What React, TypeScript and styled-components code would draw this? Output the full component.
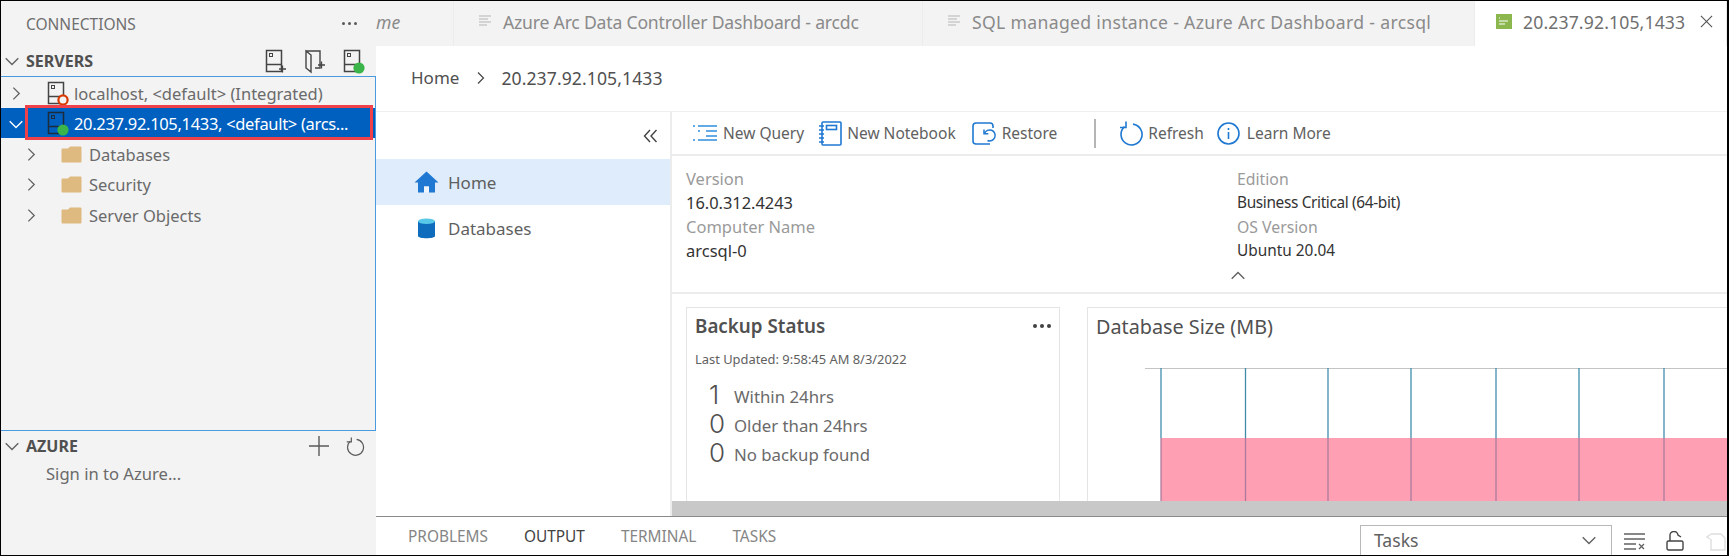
import React from 'react'
import styled, { createGlobalStyle } from 'styled-components'

const GlobalStyle = createGlobalStyle`
  html, body { margin: 0; padding: 0; background: #fff; }
  * { box-sizing: border-box; }
  body { font-family: "Noto Sans", "Open Sans", sans-serif; color: #616161; }
`

const Frame = styled.div`
  width: 1729px;
  height: 556px;
  display: flex;
  border: 1px solid #000;
  border-right-width: 2px;
  overflow: hidden;
  background: #fff;
`

const Sidebar = styled.aside`
  width: 375px;
  flex-shrink: 0;
  background: #f3f3f3;
  display: flex;
  flex-direction: column;
`

const SidebarTitle = styled.div`
  height: 45px;
  padding: 0 19px 0 25px;
  display: flex;
  align-items: center;
  justify-content: space-between;
  font-size: 15.5px;
  color: #6f6f6f;
`

const Dots = styled.span<{ $dark?: boolean }>`
  display: flex;
  gap: 3px;
  i {
    width: ${p => (p.$dark ? 4 : 3)}px;
    height: ${p => (p.$dark ? 4 : 3)}px;
    border-radius: 50%;
    background: ${p => (p.$dark ? '#424242' : '#5a5a5a')};
  }
`

const SectionHeader = styled.div`
  height: 30px;
  padding: 0 11px 0 3px;
  display: flex;
  align-items: center;
  font-size: 16px;
  font-weight: 700;
  color: #505050;
  svg { flex-shrink: 0; }
`

const SectionName = styled.span`
  margin-left: 6px;
  flex: 1;
`

const HeaderActions = styled.div`
  display: flex;
  gap: 17px;
  align-items: center;
`

const Tree = styled.div`
  height: 355px;
  border: 1px solid #4a9ae0;
  border-left: none;
  display: flex;
  flex-direction: column;
`

const TreeRow = styled.div<{ $selected?: boolean; $indent: number }>`
  position: relative;
  height: 30.5px;
  flex-shrink: 0;
  padding: 2px 0 0 ${p => p.$indent}px;
  display: flex;
  align-items: center;
  font-size: 16.5px;
  white-space: nowrap;
  letter-spacing: ${p => (p.$selected ? '-0.32px' : '0')};
  background: ${p => (p.$selected ? '#0060c0' : 'transparent')};
  color: ${p => (p.$selected ? '#fff' : '#6a6a6a')};
`

const RedOutline = styled.div`
  position: absolute;
  left: 24px;
  right: 2px;
  top: -3px;
  bottom: -2px;
  border: 3px solid #f0404a;
`

const RowIcon = styled.span<{ $w: number }>`
  width: ${p => p.$w}px;
  display: flex;
  align-items: center;
  flex-shrink: 0;
`

const SignIn = styled.div`
  height: 24px;
  padding-left: 45px;
  display: flex;
  align-items: center;
  font-size: 16.6px;
  color: #6a6a6a;
`

const Main = styled.main`
  flex: 1;
  min-width: 0;
  display: flex;
  flex-direction: column;
`

const TabBar = styled.div`
  height: 45px;
  flex-shrink: 0;
  background: #f3f3f3;
  display: flex;
  font-size: 17.6px;
  color: #8a8a8a;
`

const Tab = styled.div<{ $w: number; $active?: boolean; $spacing?: number }>`
  width: ${p => p.$w}px;
  flex-shrink: 0;
  display: flex;
  align-items: center;
  gap: ${p => (p.$active ? 11 : 10)}px;
  padding: 0 0 4px ${p => (p.$active ? 21 : 25)}px;
  white-space: nowrap;
  overflow: hidden;
  letter-spacing: ${p => p.$spacing ?? 0}px;
  background: ${p => (p.$active ? '#fff' : 'transparent')};
  color: ${p => (p.$active ? '#6f6f6f' : 'inherit')};
  border-right: 1px solid #ececec;
`

const CutTab = styled(Tab)`
  padding-left: 0;
  font-style: italic;
`

const TabClose = styled.span`
  display: flex;
  margin-left: 4px;
`

const Breadcrumb = styled.div`
  height: 66px;
  flex-shrink: 0;
  border-bottom: 1px solid #efefef;
  padding: 0 0 2px 35px;
  display: flex;
  align-items: center;
  gap: 14px;
  font-size: 17px;
  color: #505050;
`

const CrumbServer = styled.span`
  font-size: 17.6px;
  letter-spacing: 0.08px;
`

const Body = styled.div`
  height: 404px;
  flex-shrink: 0;
  display: flex;
  border-bottom: 1px solid #8a8a8a;
  box-sizing: content-box;
`

const LeftNav = styled.nav`
  width: 294px;
  flex-shrink: 0;
  display: flex;
  flex-direction: column;
`

const CollapseRow = styled.div`
  height: 47px;
  padding: 0 12px 0 0;
  display: flex;
  align-items: center;
  justify-content: flex-end;
`

const NavItem = styled.div<{ $active?: boolean }>`
  height: 46px;
  padding-left: 38px;
  display: flex;
  align-items: center;
  gap: 9px;
  font-size: 17px;
  color: #5f5f5f;
  background: ${p => (p.$active ? '#deecfc' : 'transparent')};
`

const Content = styled.section`
  flex: 1;
  min-width: 0;
  border-left: 2px solid #ececec;
  display: flex;
  flex-direction: column;
`

const Toolbar = styled.div`
  height: 44px;
  flex-shrink: 0;
  border-bottom: 2px solid #ececec;
  padding-left: 21px;
  display: flex;
  align-items: center;
  font-size: 15.5px;
  color: #616161;
`

const ToolButton = styled.div<{ $gap: number; $after: number }>`
  display: flex;
  align-items: center;
  gap: ${p => p.$gap}px;
  margin-right: ${p => p.$after}px;
  white-space: nowrap;
`

const ToolDivider = styled.span`
  width: 2px;
  height: 29px;
  background: #b5b5b5;
  margin-right: 23px;
`

const Properties = styled.div`
  height: 138px;
  flex-shrink: 0;
  border-bottom: 2px solid #ececec;
  padding: 11px 0 0 14px;
  display: grid;
  grid-template-columns: 551px 1fr;
  grid-auto-rows: 24px;
`

const PropLabel = styled.div<{ $size: number }>`
  font-size: ${p => p.$size}px;
  color: #9a9a9a;
  line-height: 24px;
`

const PropValue = styled.div<{ $size: number; $spacing?: number }>`
  font-size: ${p => p.$size}px;
  letter-spacing: ${p => p.$spacing ?? 0}px;
  color: #333;
  line-height: 24px;
`

const ExpandToggle = styled.div`
  grid-column: 2;
  display: flex;
  align-items: center;
  height: 26px;
  margin-left: -7px;
`

const Cards = styled.div`
  flex: 1;
  min-height: 0;
  padding: 13px 0 0 14px;
  display: flex;
  gap: 27px;
  overflow: hidden;
`

const Card = styled.div<{ $w?: number }>`
  ${p => (p.$w ? `width: ${p.$w}px; flex-shrink: 0;` : 'flex: 1; min-width: 0;')}
  border: 1px solid #e4e4e4;
  border-bottom: none;
  ${p => (p.$w ? '' : 'border-right: none;')}
  padding: 5px 8px 0;
`

const CardHead = styled.div`
  display: flex;
  align-items: center;
  justify-content: space-between;
  height: 26px;
`

const CardTitle = styled.div<{ $semi?: boolean }>`
  font-size: ${p => (p.$semi ? 18.8 : 19.8)}px;
  font-weight: ${p => (p.$semi ? 600 : 400)};
  color: #505050;
`

const Updated = styled.div`
  font-size: 12.9px;
  color: #616161;
  margin-top: 11px;
  line-height: 18px;
`

const BackupList = styled.div`
  margin-top: 14px;
  padding-left: 14px;
  display: flex;
  flex-direction: column;
`

const BackupRow = styled.div`
  height: 29px;
  display: flex;
  align-items: center;
`

const BackupCount = styled.span`
  width: 25px;
  font-size: 26px;
  font-weight: 300;
  color: #505050;
  font-family: Inter, "Noto Sans", sans-serif;
  line-height: 29px;
  margin-top: -4px;
`

const BackupLabel = styled.span`
  font-size: 16.8px;
  color: #6a6a6a;
`

const ChartSvg = styled.svg`
  display: block;
  margin: 29px 0 0 -8px;
`

const ScrollBar = styled.div`
  height: 15px;
  flex-shrink: 0;
  background: #c8c8c8;
`

const Panel = styled.div`
  height: 38px;
  flex-shrink: 0;
  display: flex;
  align-items: flex-start;
  overflow: hidden;
`

const PanelTabs = styled.div`
  flex: 1;
  height: 100%;
  padding: 0 0 0 32px;
  display: flex;
  align-items: center;
  gap: 36px;
  font-size: 15.4px;
`

const PanelTab = styled.span<{ $active?: boolean }>`
  color: ${p => (p.$active ? '#424242' : '#858585')};
`

const TaskSelect = styled.div`
  width: 252px;
  height: 44px;
  margin-top: 8px;
  border: 1px solid #b8b8b8;
  padding: 0 14px 14px 13px;
  display: flex;
  align-items: center;
  justify-content: space-between;
  font-size: 17.6px;
  color: #616161;
`

const PanelActions = styled.div`
  width: 115px;
  padding: 14px 0 0 12px;
  display: flex;
  gap: 20px;
  align-items: center;
`

const Chevron = ({ dir, color = '#616161', size = 14 }: { dir: 'right' | 'down' | 'up'; color?: string; size?: number }) => {
  const points = {
    right: '5,1.5 10.5,7 5,12.5',
    down: '1.5,4.5 7,10 12.5,4.5',
    up: '1.5,9.5 7,4 12.5,9.5'
  }[dir]
  return (
    <svg width={size} height={size} viewBox="0 0 14 14" fill="none">
      <polyline points={points} stroke={color} strokeWidth="1.2" />
    </svg>
  )
}

const ServerIcon = ({ badge, color = '#444', plus }: { badge?: 'red' | 'green'; color?: string; plus?: boolean }) => (
  <svg width="22" height="25" viewBox="0 0 22 25" fill="none">
    <path d="M1.5 1.5h15v21h-15zM1.5 15.5h15" stroke={color} strokeWidth="1.5" />
    <rect x="4.5" y="4.5" width="3" height="3" stroke={color} strokeWidth="1" />
    {badge === 'red' && <circle cx="16" cy="19" r="4.6" fill="#f3f3f3" stroke="#d83b01" strokeWidth="2.2" />}
    {badge === 'green' && <circle cx="16" cy="19" r="5.6" fill="#3bb44a" />}
    {plus && <path d="M14 20h7M17.5 16.5v7" stroke={color} strokeWidth="1.3" />}
  </svg>
)

const GroupIcon = () => (
  <svg width="22" height="25" viewBox="0 0 22 25" fill="none">
    <path d="M2 2h14v17h-5M2 2v17l5 4V6L2 2z" stroke="#444" strokeWidth="1.4" />
    <path d="M14 16h7M17.5 12.5v7" stroke="#444" strokeWidth="1.3" />
  </svg>
)

const Folder = () => (
  <svg width="21" height="17" viewBox="0 0 21 17">
    <path d="M0.5 3.5a1 1 0 0 1 1-1h5.5l2-2h10.5a1 1 0 0 1 1 1v14a1 1 0 0 1-1 1h-18a1 1 0 0 1-1-1z" fill="#dfba80" />
  </svg>
)

const TabDoc = () => (
  <svg width="14" height="13" viewBox="0 0 14 13" stroke="#b5b5b5" strokeWidth="1.2">
    <path d="M0 1h12M0 4h9M0 7h12M0 10h8" />
  </svg>
)

const ActiveTabDoc = () => (
  <svg width="16" height="15" viewBox="0 0 16 15">
    <rect width="16" height="15" fill="#8bb74e" />
    <path d="M3 4h1M3 7h9M3 10h6" stroke="#fff" strokeWidth="1.2" />
  </svg>
)

const CloseIcon = () => (
  <svg width="13" height="13" viewBox="0 0 14 14" stroke="#555" strokeWidth="1.2">
    <path d="M1 1l12 12M13 1L1 13" />
  </svg>
)

const CollapseIcon = () => (
  <svg width="15" height="14" viewBox="0 0 15 14" fill="none" stroke="#444" strokeWidth="1.4">
    <path d="M7 1L1.5 7 7 13M13.5 1L8 7l5.5 6" />
  </svg>
)

const HomeIcon = () => (
  <svg width="25" height="22" viewBox="0 0 25 22">
    <path d="M12.5 0.5L0.5 11.5h3.5v10h6v-6h5v6h6v-10h3.5z" fill="#1f78d1" />
    <path d="M10 15.5h5v6h-5z" fill="#eef5fd" />
  </svg>
)

const DbIcon = () => (
  <svg width="25" height="21" viewBox="-3 0 25 21">
    <path d="M1 3v15c0 3 17 3 17 0V3z" fill="#0f6cbd" />
    <ellipse cx="9.5" cy="3.2" rx="8.5" ry="2.8" fill="#59c7e8" />
  </svg>
)

const QueryIcon = () => (
  <svg width="25" height="18" viewBox="0 0 25 18" fill="none" stroke="#2f8ede" strokeWidth="1.6">
    <path d="M5 2h19M13 7h11M13 12h11M5 16h19M0 2h2M5 7h2M0 16h2" />
  </svg>
)

const NotebookIcon = () => (
  <svg width="23" height="25" viewBox="0 0 23 25" fill="none" stroke="#1f78d1" strokeWidth="1.6">
    <rect x="3" y="1" width="19" height="23" rx="1" />
    <rect x="7.5" y="4.5" width="10" height="4" />
    <path d="M0 5h5M0 9h5M0 13h5M0 17h5M0 21h5" />
  </svg>
)

const RestoreIcon = () => (
  <svg width="25" height="23" viewBox="0 0 25 23" fill="none" stroke="#1f78d1" strokeWidth="1.6">
    <path d="M21 6V4a3 3 0 0 0-3-3H4a3 3 0 0 0-3 3v15a3 3 0 0 0 3 3h14" />
    <path d="M12.5 11.5A5.5 5.5 0 1 1 15.5 18.5" strokeWidth="1.5" />
    <path d="M12 7.5v4.3h4.3" strokeWidth="1.5" />
  </svg>
)

const RefreshIcon = ({ color = '#1f78d1', size = 25 }: { color?: string; size?: number }) => (
  <svg width={size} height={size} viewBox="0 0 25 25" fill="none" stroke={color} strokeWidth="1.6">
    <path d="M14 3.1A10.5 10.5 0 1 1 5.5 5.7" />
    <path d="M7 0.5v6H1" />
  </svg>
)

const InfoIcon = () => (
  <svg width="23" height="23" viewBox="0 0 23 23" fill="none" stroke="#1f78d1" strokeWidth="1.6">
    <circle cx="11.5" cy="11.5" r="10.5" />
    <path d="M11.5 10v7M11.5 6v2" />
  </svg>
)

const PlusIcon = () => (
  <svg width="20" height="20" viewBox="0 0 20 20" stroke="#5a5a5a" strokeWidth="1.4">
    <path d="M0 10h20M10 0v20" />
  </svg>
)

const ClearIcon = () => (
  <svg width="22" height="17" viewBox="0 0 22 17" fill="none" stroke="#616161" strokeWidth="1.3">
    <path d="M0 1h21M0 6h21M0 11h12M0 16h12M15 11l5 5M20 11l-5 5" />
  </svg>
)

const LockIcon = () => (
  <svg width="18" height="20" viewBox="0 0 18 20" fill="none" stroke="#444" strokeWidth="1.4">
    <rect x="1" y="10" width="16" height="9" rx="1.5" />
    <path d="M4 10V5a4 4 0 0 1 8-1l3 2" />
  </svg>
)

const CopyIcon = () => (
  <svg width="22" height="20" viewBox="0 0 22 20" fill="none" stroke="#dedede" strokeWidth="1.4">
    <path d="M7 3h10l4 4v12H7V8M7 3L3 6l3 2" />
  </svg>
)

// Database Size bars, cropped by the card as in the dashboard
const gridLines = [73, 157.5, 240, 323, 408, 491, 576]

const Chart = () => (
  <ChartSvg width="640" height="135" viewBox="0 0 640 135">
    <rect x="73" y="70" width="567" height="65" fill="#ff9fb3" />
    <path d="M57 0.5H640" stroke="#c4c4c4" strokeWidth="1.2" />
    {gridLines.map(x => (
      <g key={x}>
        <path d={`M${x} 0V70`} stroke="#3e8eaa" strokeWidth="1.3" />
        <path d={`M${x} 70V135`} stroke="#a97c9e" strokeWidth="1.3" />
      </g>
    ))}
  </ChartSvg>
)

const App: React.FC = () => (
  <>
    <GlobalStyle />
    <Frame>
      <Sidebar>
        <SidebarTitle>
          CONNECTIONS
          <Dots><i /><i /><i /></Dots>
        </SidebarTitle>
        <SectionHeader>
          <Chevron dir="down" size={16} />
          <SectionName>SERVERS</SectionName>
          <HeaderActions>
            <ServerIcon plus />
            <GroupIcon />
            <ServerIcon badge="green" />
          </HeaderActions>
        </SectionHeader>
        <Tree>
          <TreeRow $indent={7}>
            <RowIcon $w={39}><Chevron dir="right" size={15} /></RowIcon>
            <RowIcon $w={27}><ServerIcon badge="red" /></RowIcon>
            localhost, &lt;default&gt; (Integrated)
          </TreeRow>
          <TreeRow $indent={7} $selected>
            <RedOutline />
            <RowIcon $w={39}><Chevron dir="down" color="#fff" size={16} /></RowIcon>
            <RowIcon $w={27}><ServerIcon badge="green" color="#1d2b3a" /></RowIcon>
            20.237.92.105,1433, &lt;default&gt; (arcs...
          </TreeRow>
          {['Databases', 'Security', 'Server Objects'].map(name => (
            <TreeRow key={name} $indent={22}>
              <RowIcon $w={38}><Chevron dir="right" size={15} /></RowIcon>
              <RowIcon $w={28}><Folder /></RowIcon>
              {name}
            </TreeRow>
          ))}
        </Tree>
        <SectionHeader>
          <Chevron dir="down" size={16} />
          <SectionName>AZURE</SectionName>
          <HeaderActions>
            <PlusIcon />
            <RefreshIcon color="#5a5a5a" size={19} />
          </HeaderActions>
        </SectionHeader>
        <SignIn>Sign in to Azure...</SignIn>
      </Sidebar>
      <Main>
        <TabBar>
          <CutTab $w={78}><em>me</em></CutTab>
          <Tab $w={469} $spacing={-0.2}><TabDoc />Azure Arc Data Controller Dashboard - arcdc</Tab>
          <Tab $w={552} $spacing={0.33}><TabDoc />SQL managed instance - Azure Arc Dashboard - arcsql</Tab>
          <Tab $w={252} $active $spacing={0.14}><ActiveTabDoc />20.237.92.105,1433<TabClose><CloseIcon /></TabClose></Tab>
        </TabBar>
        <Breadcrumb>
          Home
          <Chevron dir="right" color="#444" size={14} />
          <CrumbServer>20.237.92.105,1433</CrumbServer>
        </Breadcrumb>
        <Body>
          <LeftNav>
            <CollapseRow><CollapseIcon /></CollapseRow>
            <NavItem $active><HomeIcon />Home</NavItem>
            <NavItem><DbIcon />Databases</NavItem>
          </LeftNav>
          <Content>
            <Toolbar>
              <ToolButton $gap={5} $after={15}><QueryIcon />New Query</ToolButton>
              <ToolButton $gap={5} $after={16}><NotebookIcon />New Notebook</ToolButton>
              <ToolButton $gap={5} $after={37}><RestoreIcon />Restore</ToolButton>
              <ToolDivider />
              <ToolButton $gap={4} $after={13}><RefreshIcon />Refresh</ToolButton>
              <ToolButton $gap={7} $after={0}><InfoIcon />Learn More</ToolButton>
            </Toolbar>
            <Properties>
              <PropLabel $size={16.5}>Version</PropLabel>
              <PropLabel $size={15.8}>Edition</PropLabel>
              <PropValue $size={16.4}>16.0.312.4243</PropValue>
              <PropValue $size={15.4} $spacing={-0.35}>Business Critical (64-bit)</PropValue>
              <PropLabel $size={16.5}>Computer Name</PropLabel>
              <PropLabel $size={15.8}>OS Version</PropLabel>
              <PropValue $size={16.5}>arcsql-0</PropValue>
              <PropValue $size={15.4}>Ubuntu 20.04</PropValue>
              <ExpandToggle><Chevron dir="up" size={16} /></ExpandToggle>
            </Properties>
            <Cards>
              <Card $w={374}>
                <CardHead>
                  <CardTitle $semi>Backup Status</CardTitle>
                  <Dots $dark><i /><i /><i /></Dots>
                </CardHead>
                <Updated>Last Updated: 9:58:45 AM 8/3/2022</Updated>
                <BackupList>
                  <BackupRow><BackupCount>1</BackupCount><BackupLabel>Within 24hrs</BackupLabel></BackupRow>
                  <BackupRow><BackupCount>0</BackupCount><BackupLabel>Older than 24hrs</BackupLabel></BackupRow>
                  <BackupRow><BackupCount>0</BackupCount><BackupLabel>No backup found</BackupLabel></BackupRow>
                </BackupList>
              </Card>
              <Card>
                <CardHead><CardTitle>Database Size (MB)</CardTitle></CardHead>
                <Chart />
              </Card>
            </Cards>
            <ScrollBar />
          </Content>
        </Body>
        <Panel>
          <PanelTabs>
            <PanelTab>PROBLEMS</PanelTab>
            <PanelTab $active>OUTPUT</PanelTab>
            <PanelTab>TERMINAL</PanelTab>
            <PanelTab>TASKS</PanelTab>
          </PanelTabs>
          <TaskSelect>Tasks<Chevron dir="down" size={16} /></TaskSelect>
          <PanelActions>
            <ClearIcon />
            <LockIcon />
            <CopyIcon />
          </PanelActions>
        </Panel>
      </Main>
    </Frame>
  </>
)

export default App
